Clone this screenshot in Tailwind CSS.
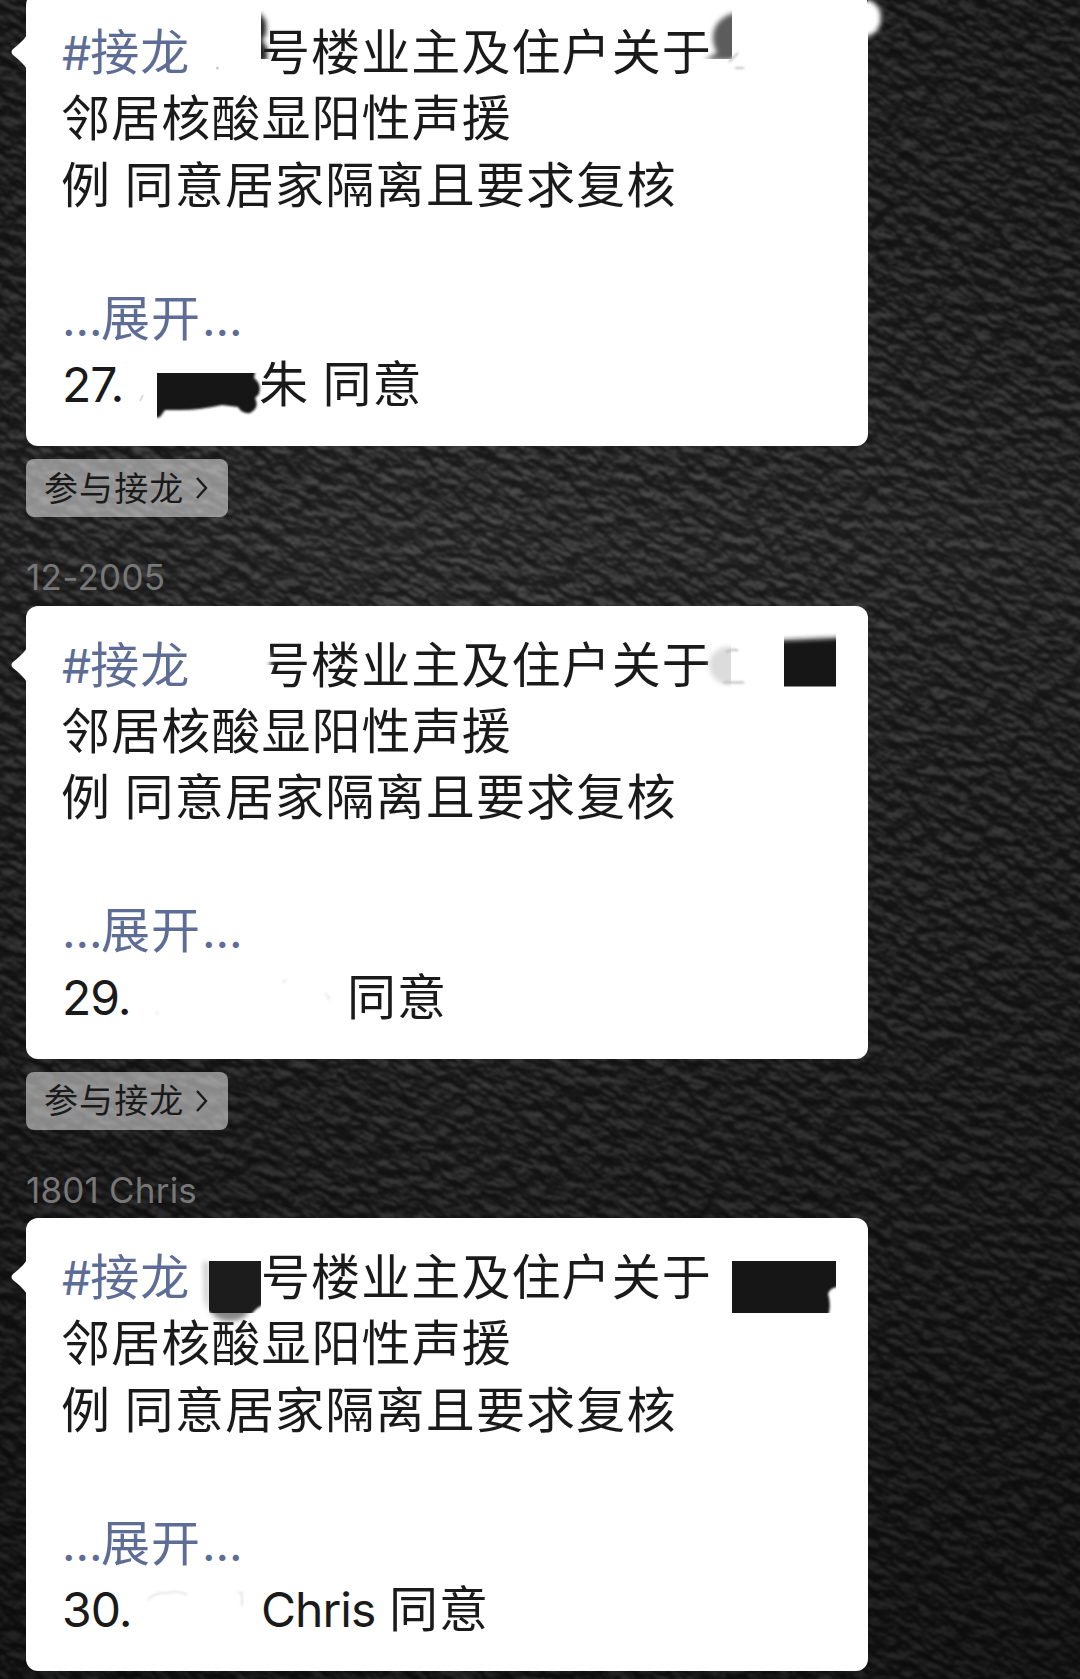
<!DOCTYPE html>
<html lang="zh-CN">
<head>
    <meta charset="UTF-8">
    <meta name="viewport" content="width=device-width, initial-scale=1.0">
    <title>群接龙</title>
    <script src="https://cdn.jsdelivr.net/npm/@tailwindcss/browser@4"></script>
</head>
<body class="bg-[#1c1c1c] font-['Inter','Noto_Sans_CJK_SC',sans-serif] text-[#1a1a1a]">
<div class="relative h-[1679px] w-[1080px] overflow-hidden">

    <!-- Leather wallpaper -->
    <svg class="absolute -top-[200px] -left-[500px] h-[2100px] w-[2100px] rotate-[30deg]" viewBox="0 0 2100 2100">
        <filter id="leather" x="0" y="0" width="100%" height="100%" color-interpolation-filters="sRGB">
            <feTurbulence type="fractalNoise" baseFrequency="0.055 0.1" numOctaves="3" seed="21" result="noise"/>
            <feDiffuseLighting in="noise" surfaceScale="5" diffuseConstant="0.5" lighting-color="#ffffff" result="lit">
                <feDistantLight azimuth="240" elevation="42"/>
            </feDiffuseLighting>
            <feComponentTransfer>
                <feFuncR type="table" tableValues="0.09 0.09 0.105 0.135 0.22 0.31 0.36 0.38 0.4 0.4 0.4"/>
                <feFuncG type="table" tableValues="0.09 0.09 0.105 0.135 0.22 0.31 0.36 0.38 0.4 0.4 0.4"/>
                <feFuncB type="table" tableValues="0.09 0.09 0.105 0.135 0.22 0.31 0.36 0.38 0.4 0.4 0.4"/>
            </feComponentTransfer>
            <feGaussianBlur stdDeviation="0.9"/>
        </filter>
        <rect width="2100" height="2100" filter="url(#leather)"/>
    </svg>
    <div class="absolute inset-0 bg-linear-to-b from-black/20 via-white/2 via-32% to-black/45"></div>
    <div class="absolute inset-0 bg-linear-to-r from-black/15 via-transparent via-40% to-black/15"></div>

    <main class="relative -mt-[7px] ml-[26px] w-[842px]">

        <!-- Message 27 -->
        <section class="relative h-[453px] rounded-[12px] bg-white px-9 pt-[27px]">
            <svg class="absolute top-[40px] -left-[15px] h-[38px] w-4" viewBox="0 0 16 38"><path d="M16 1C15 4 12 8 2 16Q-1 19 2 22C12 30 15 34 16 37Z" fill="#fff"/></svg>
            <div class="text-[49px] leading-[66.4px] tracking-[1.1px] whitespace-nowrap">
                <p class="flex"><span class="w-[199px] text-[#5d6d96]"><span class="mr-[-1px] text-[46px] tracking-normal">#</span>接龙</span><span>号楼业主及住户关于</span></p>
                <p class="-ml-px">邻居核酸显阳性声援</p>
                <p class="-ml-px flex"><span class="w-[63.500px]">例</span><span class="tracking-[1.2px]">同意居家隔离且要求复核</span></p>
                <p class="h-[66.4px]"></p>
                <p class="flex text-[#5d6d96]"><span class="w-[39px] text-[47px] tracking-[0px]">...</span><span class="w-[101px]">展开</span><span class="text-[47px] tracking-[0px]">...</span></p>
                <p class="flex"><span class="w-[197px] text-[48px] tracking-[-1px]">27.</span><span class="w-[63.500px]">朱</span><span>同意</span></p>
            </div>
            <svg class="absolute top-0 left-0 h-[453px] w-[842px] overflow-visible" viewBox="26 -7 842 453">
                <defs>
                    <filter id="soft1" x="-30%" y="-30%" width="160%" height="160%"><feGaussianBlur stdDeviation="1.2"/></filter>
                    <filter id="soft3" x="-50%" y="-50%" width="200%" height="200%"><feGaussianBlur stdDeviation="2.5"/></filter>
                    <clipPath id="c1"><rect x="261" y="8" width="20" height="51"/></clipPath>
                    <clipPath id="c2"><rect x="698" y="8" width="34" height="51"/></clipPath>
                    <clipPath id="c3"><rect x="157" y="373" width="110" height="50"/></clipPath>
                    <clipPath id="c4"><rect x="868" y="0" width="30" height="50"/></clipPath>
                </defs>
                <g clip-path="url(#c1)"><path d="M255 14H261L266 22V34L262 40L267 48V62H255Z" fill="#222" filter="url(#soft3)"/></g>
                <g clip-path="url(#c2)"><path d="M740 12C722 14 713 25 713 38C713 47 717 51 717 53L704 60H740Z" fill="#5c5c5c" filter="url(#soft3)"/></g>
                <path d="M738 53L729 62M735 68H744" stroke="#c4c4c4" stroke-width="2" fill="none" filter="url(#soft1)"/>
                <circle cx="217.500" cy="68" r="1.500" fill="#ccc"/>
                <path d="M143 395L140 401" stroke="#ddd" stroke-width="2"/>
                <g clip-path="url(#c3)"><path d="M150 368H256L254 378Q262 384 259 394L255 398Q260 408 250 413Q242 414 238 407L230 406L222 405Q200 410 181 410L165 410L160 417L150 419Z" fill="#181818" filter="url(#soft1)"/></g>
                <g clip-path="url(#c4)"><ellipse cx="866" cy="18" rx="15" ry="18" fill="#fff" filter="url(#soft3)"/></g>
            </svg>
        </section>
        <div class="mt-[13px] flex h-[58px] w-[202px] items-center rounded-[8px] bg-white/50 pl-[18px] text-[34px] tracking-[1.1px]">
            <span class="w-[152px]">参与接龙</span>
            <svg class="h-[22px] w-[12px]" viewBox="0 0 12 22" fill="none" stroke="#1a1a1a" stroke-width="2.400"><path d="M1 1L10 11L1 21"/></svg>
        </div>
        <h2 class="h-[88.500px] pt-[38px] text-[35px] leading-[44px] tracking-[0.3px] text-[#777777]">12-2005</h2>

        <!-- Message 29 -->
        <section class="relative h-[453px] rounded-[12px] bg-white px-9 pt-[27px]">
            <svg class="absolute top-[40px] -left-[15px] h-[38px] w-4" viewBox="0 0 16 38"><path d="M16 1C15 4 12 8 2 16Q-1 19 2 22C12 30 15 34 16 37Z" fill="#fff"/></svg>
            <div class="text-[49px] leading-[66.4px] tracking-[1.1px] whitespace-nowrap">
                <p class="flex"><span class="w-[199px] text-[#5d6d96]"><span class="mr-[-1px] text-[46px] tracking-normal">#</span>接龙</span><span>号楼业主及住户关于</span></p>
                <p class="-ml-px">邻居核酸显阳性声援</p>
                <p class="-ml-px flex"><span class="w-[63.500px]">例</span><span class="tracking-[1.2px]">同意居家隔离且要求复核</span></p>
                <p class="h-[66.4px]"></p>
                <p class="flex text-[#5d6d96]"><span class="w-[39px] text-[47px] tracking-[0px]">...</span><span class="w-[101px]">展开</span><span class="text-[47px] tracking-[0px]">...</span></p>
                <p class="flex"><span class="w-[285px] text-[48px] tracking-[-1px]">29.</span><span>同意</span></p>
            </div>
            <svg class="absolute top-0 left-0 h-[453px] w-[842px]" viewBox="26 605.500 842 453">
                <defs>
                    <clipPath id="c5"><rect x="784" y="630" width="52" height="56"/></clipPath>
                    <clipPath id="c6"><rect x="700" y="630" width="31" height="60"/></clipPath>
                </defs>
                <ellipse cx="264" cy="662" rx="7" ry="12" fill="#fff" filter="url(#soft3)"/>
                <g clip-path="url(#c6)"><ellipse cx="729" cy="665" rx="20" ry="19" fill="#dcdcdc" filter="url(#soft3)"/></g>
                <path d="M726 652Q731 648 738 650M723 682H744" stroke="#bbb" stroke-width="2" fill="none" filter="url(#soft1)"/>
                <g clip-path="url(#c5)"><path d="M776 640L846 637V700H776Z" fill="#181818" filter="url(#soft3)"/></g>
                <path d="M156 1011L158 1014M283 982L286 979M325 993L330 999" stroke="#efefef" stroke-width="3" filter="url(#soft1)"/>
            </svg>
        </section>
        <div class="mt-[13px] flex h-[58px] w-[202px] items-center rounded-[8px] bg-white/50 pl-[18px] text-[34px] tracking-[1.1px]">
            <span class="w-[152px]">参与接龙</span>
            <svg class="h-[22px] w-[12px]" viewBox="0 0 12 22" fill="none" stroke="#1a1a1a" stroke-width="2.400"><path d="M1 1L10 11L1 21"/></svg>
        </div>
        <h2 class="h-[88.500px] pt-[38px] text-[35px] leading-[44px] tracking-[0.2px] text-[#777777]">1801 Chris</h2>

        <!-- Message 30 -->
        <section class="relative h-[453px] rounded-[12px] bg-white px-9 pt-[27px]">
            <svg class="absolute top-[40px] -left-[15px] h-[38px] w-4" viewBox="0 0 16 38"><path d="M16 1C15 4 12 8 2 16Q-1 19 2 22C12 30 15 34 16 37Z" fill="#fff"/></svg>
            <div class="text-[49px] leading-[66.4px] tracking-[1.1px] whitespace-nowrap">
                <p class="flex"><span class="w-[199px] text-[#5d6d96]"><span class="mr-[-1px] text-[46px] tracking-normal">#</span>接龙</span><span>号楼业主及住户关于</span></p>
                <p class="-ml-px">邻居核酸显阳性声援</p>
                <p class="-ml-px flex"><span class="w-[63.500px]">例</span><span class="tracking-[1.2px]">同意居家隔离且要求复核</span></p>
                <p class="h-[66.4px]"></p>
                <p class="flex text-[#5d6d96]"><span class="w-[39px] text-[47px] tracking-[0px]">...</span><span class="w-[101px]">展开</span><span class="text-[47px] tracking-[0px]">...</span></p>
                <p class="flex"><span class="w-[199px] text-[48px] tracking-[-1px]">30.</span><span class="w-[128px] text-[48px] tracking-[-1px]">Chris</span><span>同意</span></p>
            </div>
            <svg class="absolute top-0 left-0 h-[453px] w-[842px]" viewBox="26 1218 842 453">
                <defs>
                    <clipPath id="c7"><rect x="209" y="1261" width="52" height="52"/></clipPath>
                    <clipPath id="c8"><rect x="732" y="1261" width="104" height="52"/></clipPath>
                    <clipPath id="c9"><rect x="200" y="1313" width="70" height="20"/></clipPath>
                </defs>
                <path d="M203 1262H209V1312Q202 1300 204 1285Z" fill="#ccc" filter="url(#soft3)"/>
                <g clip-path="url(#c7)"><path d="M200 1250H270V1302Q254 1306 247 1322H218Q210 1310 200 1306Z" fill="#1c1c1c" filter="url(#soft1)"/></g>
                <g clip-path="url(#c9)"><ellipse cx="230" cy="1307" rx="20" ry="14" fill="#888" filter="url(#soft3)"/></g>
                <g clip-path="url(#c8)"><path d="M726 1250H846V1286Q830 1286 828 1294Q832 1306 827 1320H726Z" fill="#181818" filter="url(#soft1)"/></g>
                <path d="M148 1600Q154 1592 166 1593Q180 1590 187 1595M238 1593H242V1606" stroke="#e6e6e6" stroke-width="2" fill="none" filter="url(#soft1)"/>
            </svg>
        </section>
    </main>
</div>
</body>
</html>
